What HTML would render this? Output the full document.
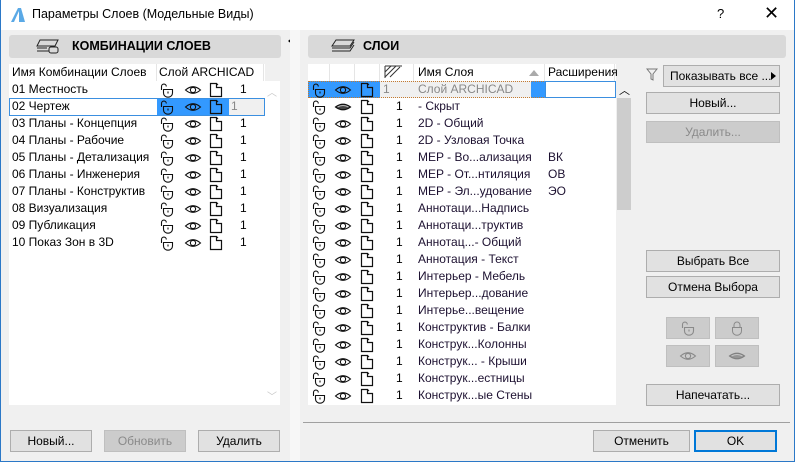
<!DOCTYPE html>
<html><head><meta charset="utf-8"><style>
*{box-sizing:border-box;margin:0;padding:0}
body{width:795px;height:462px;overflow:hidden;background:#f0f0f0;font:12px "Liberation Sans","DejaVu Sans",sans-serif;color:#000;position:relative}
.a{position:absolute}
.tb{left:0;top:0;width:795px;height:30px;background:#fff}
.win{left:0;top:0;width:795px;height:462px;border:1px solid #2b78c7;border-top:none;pointer-events:none}
.hdr{background:#d9d9d9;border-radius:3px;height:23px;font-weight:bold;font-size:12.5px;line-height:23px}
.btn{background:#e1e1e1;border:1px solid #adadad;text-align:center;line-height:20px;height:22px}
.dis{background:#cccccc;border-color:#bfbfbf;color:#8a8a8a}
.row{position:absolute;height:17px;line-height:17px;white-space:nowrap}
svg.i{position:absolute;width:18px;height:16px}
.ch{position:absolute;top:64px;height:17px;line-height:16px;background:#fff;border-right:1px solid #e5e5e5}
</style></head><body>
<svg width="0" height="0" style="position:absolute">
<defs>
<symbol id="L" viewBox="0 0 18 16"><path d="M3.5 8V4.5a2.4 2.4 0 0 1 4.8 0" fill="none" stroke="#111" stroke-width="1.1"/><path d="M5.5 7.5h9v3.5a4.5 4.2 0 0 1-9 0z" fill="none" stroke="#111" stroke-width="1.1"/><path d="M10 9.5v2" stroke="#111" stroke-width="1.1"/></symbol>
<symbol id="E" viewBox="0 0 18 16"><path d="M1.5 8Q9 1.5 16.5 8Q9 14.5 1.5 8z" fill="none" stroke="#111" stroke-width="1.1"/><circle cx="9" cy="8" r="2.6" fill="none" stroke="#111" stroke-width="1.1"/></symbol>
<symbol id="H" viewBox="0 0 18 16"><path d="M1.5 8Q9 2.5 16.5 8Q9 13.5 1.5 8z" fill="#444" stroke="#111" stroke-width="1.1"/><path d="M3.5 8Q9 5 14.5 8" fill="none" stroke="#bbb" stroke-width="1"/></symbol>
<symbol id="F" viewBox="0 0 18 16"><path d="M3.5 1.5h6v4h5v9h-11z" fill="none" stroke="#111" stroke-width="1.2"/><path d="M9.5 1.5l1.5 1.5" fill="none" stroke="#111" stroke-width="1.1"/></symbol>
</defs></svg>

<div class="a tb"></div>
<svg class="a" style="left:10px;top:7px" width="16" height="16"><path d="M1 15L8 1h3L15 15z" fill="#5aa9e6"/><path d="M4 15L9 4v11z" fill="#fff"/></svg>
<div class="a" style="left:32px;top:7px;font-size:12.5px">Параметры Слоев (Модельные Виды)</div>
<div class="a" style="left:717px;top:6px;font-size:13px">?</div>
<div class="a" style="left:764px;top:3px;font-size:18px">✕</div>

<!-- left panel -->
<div class="a hdr" style="left:9px;top:35px;width:272px;padding-left:63px">КОМБИНАЦИИ СЛОЕВ</div>
<svg class="a" style="left:34px;top:38px" width="28" height="17"><g fill="none" stroke="#222" stroke-width="1"><path d="M6 2h18l-3 6H3z"/><path d="M3 10h10M3 13h12"/><rect x="15" y="9" width="9" height="6" rx="2"/></g></svg>
<div class="a" style="left:288px;top:37px;width:0;height:0;border:4px solid transparent;border-right:5px solid #000;border-left:none"></div>

<div class="a" style="left:9px;top:64px;width:256px;height:341px;background:#fff"></div>
<div class="ch" style="left:9px;width:148px;padding-left:3px">Имя Комбинации Слоев</div>
<div class="ch" style="left:157px;width:107px;padding-left:2px">Слой ARCHICAD</div>
<div class="a" style="left:265px;top:81px;width:15px;height:324px;background:#fff"></div>
<div class="a" style="left:267px;top:84px;color:#c8c8c8;font-size:10px">︿</div>
<div class="a" style="left:267px;top:388px;color:#c8c8c8;font-size:10px">﹀</div>

<div class="a" style="left:157px;top:98px;width:72px;height:17px;background:#3399ff"></div>
<div class="a" style="left:229px;top:98px;width:35px;height:17px;background:#f0f0f0"></div>
<div class="a" style="left:9px;top:98px;width:256px;height:18px;border:1px solid #3b8fe0"></div>

<div class="row" style="left:12px;top:81px">01 Местность</div>
<div class="row" style="left:12px;top:98px">02 Чертеж</div>
<div class="row" style="left:12px;top:115px">03 Планы - Концепция</div>
<div class="row" style="left:12px;top:132px">04 Планы - Рабочие</div>
<div class="row" style="left:12px;top:149px">05 Планы - Детализация</div>
<div class="row" style="left:12px;top:166px">06 Планы - Инженерия</div>
<div class="row" style="left:12px;top:183px">07 Планы - Конструктив</div>
<div class="row" style="left:12px;top:200px">08 Визуализация</div>
<div class="row" style="left:12px;top:217px">09 Публикация</div>
<div class="row" style="left:12px;top:234px">10 Показ Зон в 3D</div>

<svg class="i" style="left:158px;top:82px"><use href="#L"/></svg><svg class="i" style="left:184px;top:82px"><use href="#E"/></svg><svg class="i" style="left:207px;top:82px"><use href="#F"/></svg><div class="row" style="left:240px;top:81px">1</div>
<svg class="i" style="left:158px;top:99px"><use href="#L"/></svg><svg class="i" style="left:184px;top:99px"><use href="#E"/></svg><svg class="i" style="left:207px;top:99px"><use href="#F"/></svg><div class="row" style="left:231px;top:98px;color:#888">1</div>
<svg class="i" style="left:158px;top:116px"><use href="#L"/></svg><svg class="i" style="left:184px;top:116px"><use href="#E"/></svg><svg class="i" style="left:207px;top:116px"><use href="#F"/></svg><div class="row" style="left:240px;top:115px">1</div>
<svg class="i" style="left:158px;top:133px"><use href="#L"/></svg><svg class="i" style="left:184px;top:133px"><use href="#E"/></svg><svg class="i" style="left:207px;top:133px"><use href="#F"/></svg><div class="row" style="left:240px;top:132px">1</div>
<svg class="i" style="left:158px;top:150px"><use href="#L"/></svg><svg class="i" style="left:184px;top:150px"><use href="#E"/></svg><svg class="i" style="left:207px;top:150px"><use href="#F"/></svg><div class="row" style="left:240px;top:149px">1</div>
<svg class="i" style="left:158px;top:167px"><use href="#L"/></svg><svg class="i" style="left:184px;top:167px"><use href="#E"/></svg><svg class="i" style="left:207px;top:167px"><use href="#F"/></svg><div class="row" style="left:240px;top:166px">1</div>
<svg class="i" style="left:158px;top:184px"><use href="#L"/></svg><svg class="i" style="left:184px;top:184px"><use href="#E"/></svg><svg class="i" style="left:207px;top:184px"><use href="#F"/></svg><div class="row" style="left:240px;top:183px">1</div>
<svg class="i" style="left:158px;top:201px"><use href="#L"/></svg><svg class="i" style="left:184px;top:201px"><use href="#E"/></svg><svg class="i" style="left:207px;top:201px"><use href="#F"/></svg><div class="row" style="left:240px;top:200px">1</div>
<svg class="i" style="left:158px;top:218px"><use href="#L"/></svg><svg class="i" style="left:184px;top:218px"><use href="#E"/></svg><svg class="i" style="left:207px;top:218px"><use href="#F"/></svg><div class="row" style="left:240px;top:217px">1</div>
<svg class="i" style="left:158px;top:235px"><use href="#L"/></svg><svg class="i" style="left:184px;top:235px"><use href="#E"/></svg><svg class="i" style="left:207px;top:235px"><use href="#F"/></svg><div class="row" style="left:240px;top:234px">1</div>

<div class="a btn" style="left:10px;top:430px;width:82px">Новый...</div>
<div class="a btn dis" style="left:104px;top:430px;width:82px">Обновить</div>
<div class="a btn" style="left:198px;top:430px;width:82px">Удалить</div>

<div class="a" style="left:290px;top:30px;width:10px;height:432px;background:#f7f7f7"></div>

<!-- right panel -->
<div class="a hdr" style="left:308px;top:35px;width:478px;padding-left:55px">СЛОИ</div>
<svg class="a" style="left:330px;top:38px" width="26" height="17"><g fill="none" stroke="#222" stroke-width="1"><path d="M6 2h18l-4 6H2z"/><path d="M2 10h18l4-6M2 13h18l4-6"/></g></svg>

<div class="a" style="left:308px;top:64px;width:308px;height:341px;background:#fff"></div>
<div class="ch" style="left:308px;width:22px"></div>
<div class="ch" style="left:330px;width:25px"></div>
<div class="ch" style="left:355px;width:25px"></div>
<div class="ch" style="left:380px;width:34px"><svg width="20" height="14" style="position:absolute;left:4px;top:1px"><g stroke="#333" fill="none"><path d="M1 1v12M1 1h17"/><path d="M1 7l6-6M1 12l11-11M6 12l10-10"/></g></svg></div>
<div class="ch" style="left:414px;width:131px;padding-left:4px">Имя Слоя<span style="position:absolute;right:5px;top:6px;border:5px solid transparent;border-bottom:6px solid #aaa;border-top:none"></span></div>
<div class="ch" style="left:545px;width:70px;padding-left:3px">Расширения</div>
<div class="a" style="left:616px;top:81px;width:16px;height:324px;background:#f0f0f0"></div>
<div class="a" style="left:617px;top:98px;width:14px;height:112px;background:#cdcdcd"></div>
<div class="a" style="left:619px;top:82px;font-size:11px">︿</div>

<div class="a" style="left:308px;top:81px;width:72px;height:17px;background:#3399ff"></div>
<div class="a" style="left:380px;top:81px;width:151px;height:17px;background:#f0f0f0"></div>
<div class="a" style="left:531px;top:81px;width:14px;height:17px;background:#3399ff"></div>
<div class="a" style="left:308px;top:81px;width:308px;height:17px;border:1px dotted #c47a30"></div>
<div class="a" style="left:545px;top:81px;width:71px;height:17px;border:1px solid #3b8fe0"></div>
<div class="row" style="left:383px;top:81px;color:#888">1</div>
<div class="row" style="left:418px;top:81px;color:#888">Слой ARCHICAD</div>

<div style="color:#1c1030">
<div class="row" style="left:418px;top:98px">- Скрыт</div>
<div class="row" style="left:418px;top:115px">2D - Общий</div>
<div class="row" style="left:418px;top:132px">2D - Узловая Точка</div>
<div class="row" style="left:418px;top:149px">MEP - Во...ализация</div><div class="row" style="left:548px;top:149px">ВК</div>
<div class="row" style="left:418px;top:166px">MEP - От...нтиляция</div><div class="row" style="left:548px;top:166px">ОВ</div>
<div class="row" style="left:418px;top:183px">MEP - Эл...удование</div><div class="row" style="left:548px;top:183px">ЭО</div>
<div class="row" style="left:418px;top:200px">Аннотаци...Надпись</div>
<div class="row" style="left:418px;top:217px">Аннотаци...труктив</div>
<div class="row" style="left:418px;top:234px">Аннотац...- Общий</div>
<div class="row" style="left:418px;top:251px">Аннотация - Текст</div>
<div class="row" style="left:418px;top:268px">Интерьер - Мебель</div>
<div class="row" style="left:418px;top:285px">Интерьер...дование</div>
<div class="row" style="left:418px;top:302px">Интерье...вещение</div>
<div class="row" style="left:418px;top:319px">Конструктив - Балки</div>
<div class="row" style="left:418px;top:336px">Конструк...Колонны</div>
<div class="row" style="left:418px;top:353px">Конструк... - Крыши</div>
<div class="row" style="left:418px;top:370px">Конструк...естницы</div>
<div class="row" style="left:418px;top:387px">Конструк...ые Стены</div>
</div>

<svg class="i" style="left:310px;top:82px"><use href="#L"/></svg><svg class="i" style="left:334px;top:82px"><use href="#E"/></svg><svg class="i" style="left:358px;top:82px"><use href="#F"/></svg>
<svg class="i" style="left:310px;top:99px"><use href="#L"/></svg><svg class="i" style="left:334px;top:99px"><use href="#H"/></svg><svg class="i" style="left:358px;top:99px"><use href="#F"/></svg><div class="row" style="left:396px;top:98px">1</div>
<svg class="i" style="left:310px;top:116px"><use href="#L"/></svg><svg class="i" style="left:334px;top:116px"><use href="#E"/></svg><svg class="i" style="left:358px;top:116px"><use href="#F"/></svg><div class="row" style="left:396px;top:115px">1</div>
<svg class="i" style="left:310px;top:133px"><use href="#L"/></svg><svg class="i" style="left:334px;top:133px"><use href="#E"/></svg><svg class="i" style="left:358px;top:133px"><use href="#F"/></svg><div class="row" style="left:396px;top:132px">1</div>
<svg class="i" style="left:310px;top:150px"><use href="#L"/></svg><svg class="i" style="left:334px;top:150px"><use href="#E"/></svg><svg class="i" style="left:358px;top:150px"><use href="#F"/></svg><div class="row" style="left:396px;top:149px">1</div>
<svg class="i" style="left:310px;top:167px"><use href="#L"/></svg><svg class="i" style="left:334px;top:167px"><use href="#E"/></svg><svg class="i" style="left:358px;top:167px"><use href="#F"/></svg><div class="row" style="left:396px;top:166px">1</div>
<svg class="i" style="left:310px;top:184px"><use href="#L"/></svg><svg class="i" style="left:334px;top:184px"><use href="#E"/></svg><svg class="i" style="left:358px;top:184px"><use href="#F"/></svg><div class="row" style="left:396px;top:183px">1</div>
<svg class="i" style="left:310px;top:201px"><use href="#L"/></svg><svg class="i" style="left:334px;top:201px"><use href="#E"/></svg><svg class="i" style="left:358px;top:201px"><use href="#F"/></svg><div class="row" style="left:396px;top:200px">1</div>
<svg class="i" style="left:310px;top:218px"><use href="#L"/></svg><svg class="i" style="left:334px;top:218px"><use href="#E"/></svg><svg class="i" style="left:358px;top:218px"><use href="#F"/></svg><div class="row" style="left:396px;top:217px">1</div>
<svg class="i" style="left:310px;top:235px"><use href="#L"/></svg><svg class="i" style="left:334px;top:235px"><use href="#E"/></svg><svg class="i" style="left:358px;top:235px"><use href="#F"/></svg><div class="row" style="left:396px;top:234px">1</div>
<svg class="i" style="left:310px;top:252px"><use href="#L"/></svg><svg class="i" style="left:334px;top:252px"><use href="#E"/></svg><svg class="i" style="left:358px;top:252px"><use href="#F"/></svg><div class="row" style="left:396px;top:251px">1</div>
<svg class="i" style="left:310px;top:269px"><use href="#L"/></svg><svg class="i" style="left:334px;top:269px"><use href="#E"/></svg><svg class="i" style="left:358px;top:269px"><use href="#F"/></svg><div class="row" style="left:396px;top:268px">1</div>
<svg class="i" style="left:310px;top:286px"><use href="#L"/></svg><svg class="i" style="left:334px;top:286px"><use href="#E"/></svg><svg class="i" style="left:358px;top:286px"><use href="#F"/></svg><div class="row" style="left:396px;top:285px">1</div>
<svg class="i" style="left:310px;top:303px"><use href="#L"/></svg><svg class="i" style="left:334px;top:303px"><use href="#E"/></svg><svg class="i" style="left:358px;top:303px"><use href="#F"/></svg><div class="row" style="left:396px;top:302px">1</div>
<svg class="i" style="left:310px;top:320px"><use href="#L"/></svg><svg class="i" style="left:334px;top:320px"><use href="#E"/></svg><svg class="i" style="left:358px;top:320px"><use href="#F"/></svg><div class="row" style="left:396px;top:319px">1</div>
<svg class="i" style="left:310px;top:337px"><use href="#L"/></svg><svg class="i" style="left:334px;top:337px"><use href="#E"/></svg><svg class="i" style="left:358px;top:337px"><use href="#F"/></svg><div class="row" style="left:396px;top:336px">1</div>
<svg class="i" style="left:310px;top:354px"><use href="#L"/></svg><svg class="i" style="left:334px;top:354px"><use href="#E"/></svg><svg class="i" style="left:358px;top:354px"><use href="#F"/></svg><div class="row" style="left:396px;top:353px">1</div>
<svg class="i" style="left:310px;top:371px"><use href="#L"/></svg><svg class="i" style="left:334px;top:371px"><use href="#E"/></svg><svg class="i" style="left:358px;top:371px"><use href="#F"/></svg><div class="row" style="left:396px;top:370px">1</div>
<svg class="i" style="left:310px;top:388px"><use href="#L"/></svg><svg class="i" style="left:334px;top:388px"><use href="#E"/></svg><svg class="i" style="left:358px;top:388px"><use href="#F"/></svg><div class="row" style="left:396px;top:387px">1</div>

<!-- right buttons -->
<svg class="a" style="left:646px;top:68px" width="12" height="14"><path d="M1 1h10L7 6v6L5 11V6z" fill="none" stroke="#777"/></svg>
<div class="a btn" style="left:663px;top:65px;width:117px;text-align:left;padding-left:6px">Показывать все ...<span style="position:absolute;right:3px;top:6px;border:4px solid transparent;border-left:5px solid #000;border-right:none"></span></div>
<div class="a btn" style="left:646px;top:92px;width:134px">Новый...</div>
<div class="a btn dis" style="left:646px;top:121px;width:134px">Удалить...</div>
<div class="a btn" style="left:646px;top:250px;width:134px">Выбрать Все</div>
<div class="a btn" style="left:646px;top:276px;width:134px">Отмена Выбора</div>
<div class="a btn dis" style="left:666px;top:317px;width:44px;height:22px"><svg width="18" height="16" style="margin-top:2px" opacity=".35"><use href="#L"/></svg></div>
<div class="a btn dis" style="left:715px;top:317px;width:44px;height:22px"><svg width="18" height="16" style="margin-top:2px" opacity=".35"><path d="M6 8V5a3 3 0 0 1 6 0v3" fill="none" stroke="#111"/><path d="M4.5 7.5h9v3.5a4.5 4.2 0 0 1-9 0z" fill="none" stroke="#111"/></svg></div>
<div class="a btn dis" style="left:666px;top:345px;width:44px;height:22px"><svg width="18" height="16" style="margin-top:2px" opacity=".35"><use href="#E"/></svg></div>
<div class="a btn dis" style="left:715px;top:345px;width:44px;height:22px"><svg width="18" height="16" style="margin-top:2px" opacity=".4"><use href="#H"/></svg></div>
<div class="a btn" style="left:646px;top:384px;width:134px">Напечатать...</div>

<div class="a" style="left:303px;top:422px;width:487px;height:1px;background:#a0a0a0"></div>
<div class="a btn" style="left:593px;top:430px;width:97px">Отменить</div>
<div class="a btn" style="left:694px;top:430px;width:83px;border:2px solid #0078d7;line-height:18px">OK</div>

<div class="a win"></div>
</body></html>
